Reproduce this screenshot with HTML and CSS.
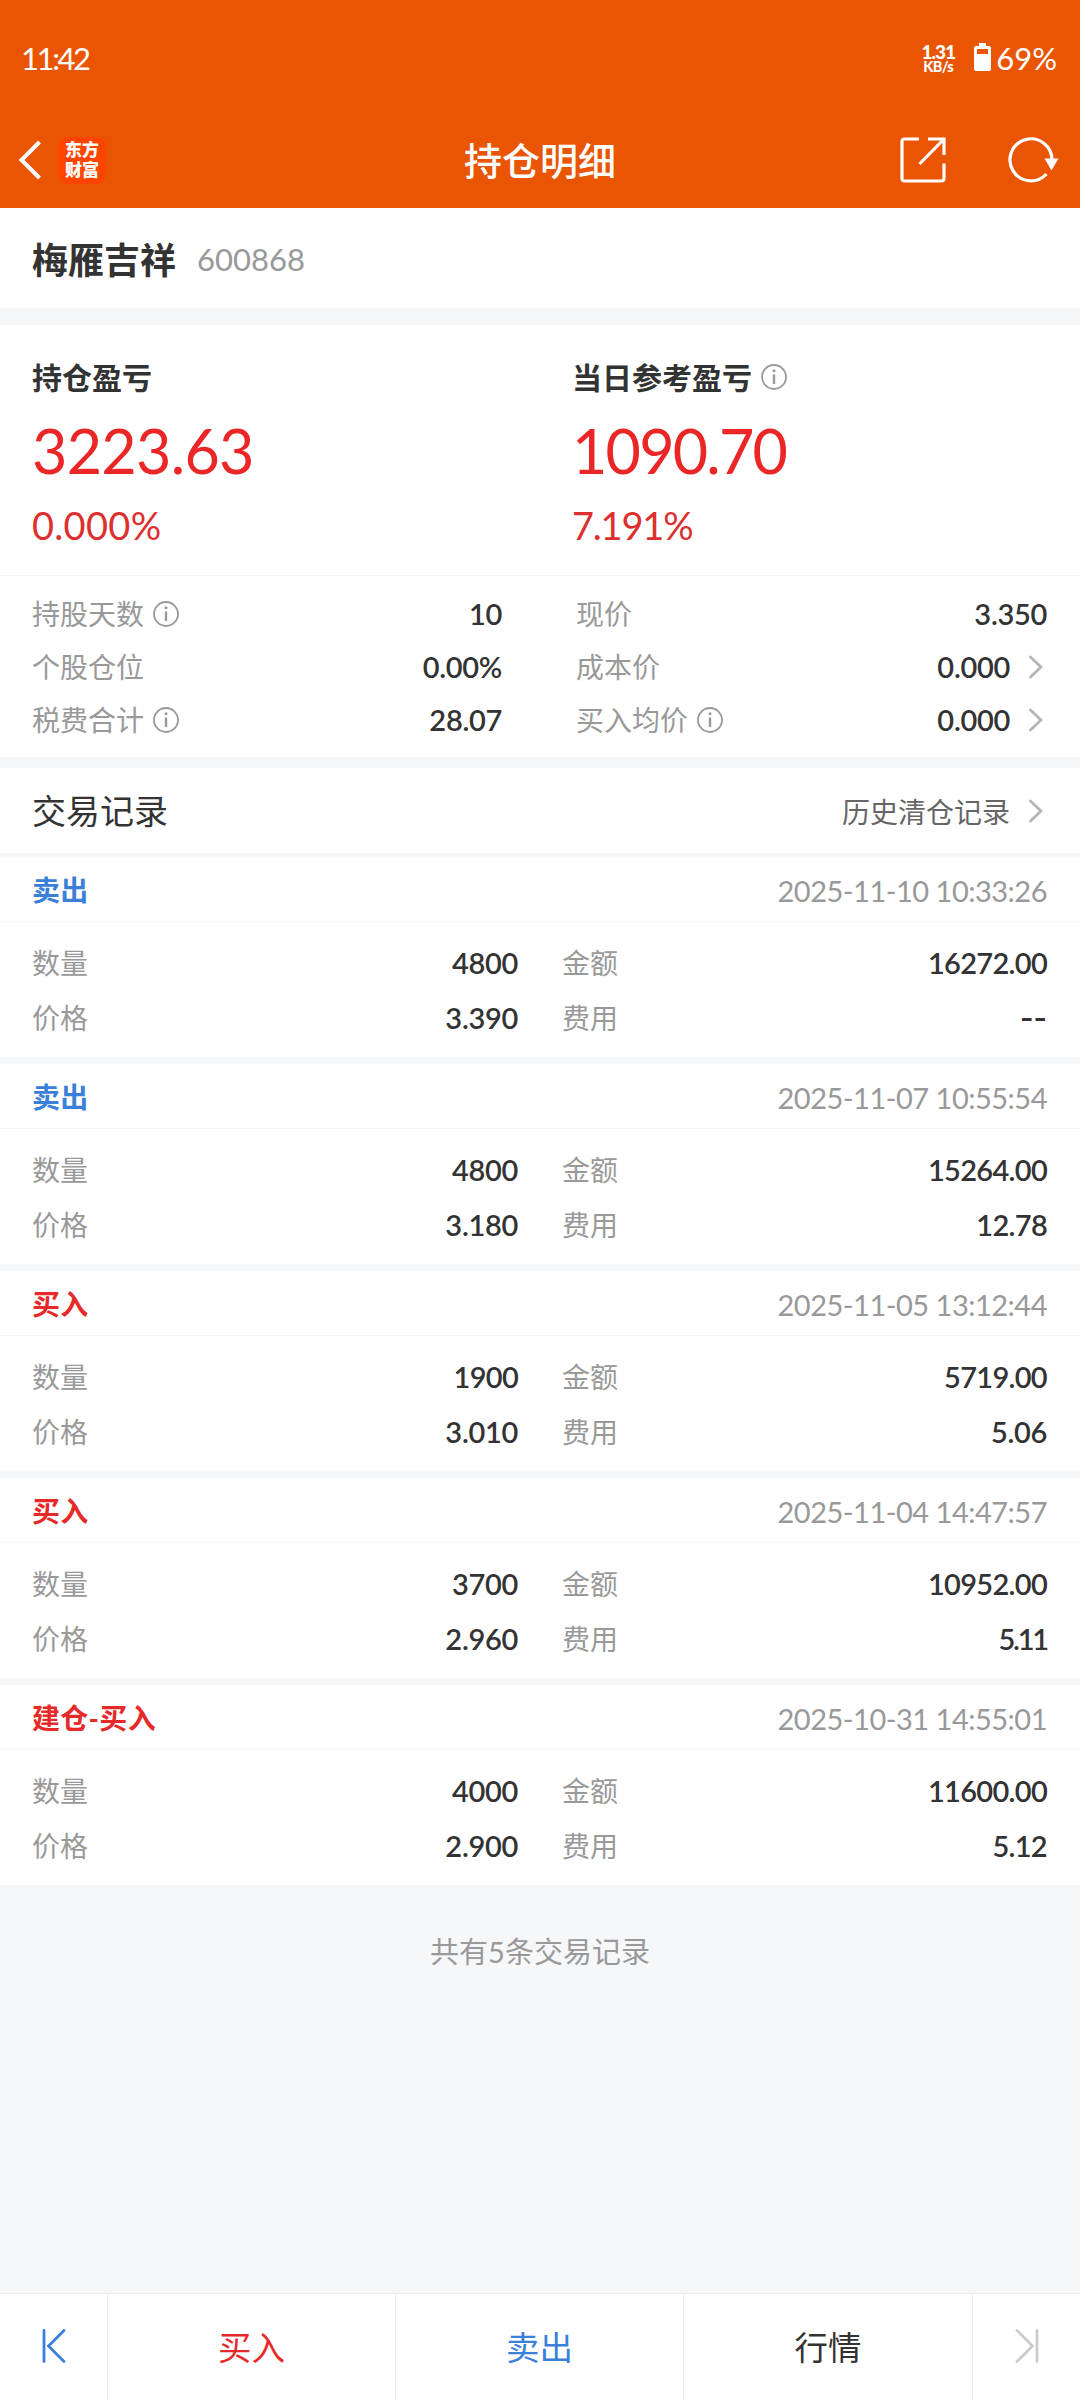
FILE: index.html
```html
<!DOCTYPE html>
<html lang="zh-CN">
  <head>
    <meta charset="UTF-8" />
    <meta name="viewport" content="width=device-width, initial-scale=1.0" />
    <link rel="stylesheet" href="styles.css">
    <title>持仓明细</title>
  </head>
  <body>
    <!-- 图标 -->
    <svg class="sprite">
      <symbol id="icon-info" viewBox="0 0 26 26">
        <circle cx="13" cy="13" r="12" fill="none" stroke="#999" stroke-width="1.8"/>
        <circle cx="13" cy="6.8" r="1.5" fill="#999"/>
        <path d="M13 10.5V20" stroke="#999" stroke-width="2.4"/>
      </symbol>
      <symbol id="icon-arrow" viewBox="0 0 14 24">
        <path d="M1.5 2L12 12L1.5 22" fill="none" stroke="#b5b5b5" stroke-width="2.8" stroke-linecap="round"/>
      </symbol>
    </svg>

    <header class="header">
      <div class="status-bar">
        <span class="time">11:42</span>
        <div class="net-speed">
          <span class="speed">1.31</span>
          <span class="unit">KB/s</span>
        </div>
        <svg class="battery" width="17" height="28" viewBox="0 0 17 28">
          <path fill="#fff" fill-rule="evenodd" d="M5 0h7v3h3a2 2 0 0 1 2 2v21a2 2 0 0 1-2 2H2a2 2 0 0 1-2-2V5a2 2 0 0 1 2-2h3zM3 6v5h11V6z"/>
        </svg>
        <span class="percent">69%</span>
      </div>
      <div class="nav-bar">
        <div class="nav-side">
          <svg class="back" width="24" height="42" viewBox="0 0 24 42">
            <path d="M21.5 3L3.5 21L21.5 39" fill="none" stroke="#fff" stroke-width="4"/>
          </svg>
          <div class="logo">东方<br>财富</div>
        </div>
        <h1>持仓明细</h1>
        <div class="nav-side nav-right">
          <svg width="46" height="46" viewBox="0 0 46 46" fill="none" stroke="#fff" stroke-width="3.2">
            <path d="M19 2H4.500Q2 2 2 4.500V41.500Q2 44 4.500 44H41.500Q44 44 44 41.500V26.500"/>
            <path d="M28 2H44V18M44 2L19.500 27"/>
          </svg>
          <svg width="52" height="46" viewBox="0 0 52 46">
            <path d="M38.500 37A21 21 0 1 1 44 23" fill="none" stroke="#fff" stroke-width="3.200"/>
            <path d="M36.500 21.500H50.500L43.500 33.500z" fill="#fff"/>
          </svg>
        </div>
      </div>
    </header>

    <section class="stock">
      <span class="stock-name">梅雁吉祥</span>
      <span class="stock-code">600868</span>
    </section>

    <section class="profit">
      <div class="profit-item">
        <div class="profit-title">持仓盈亏</div>
        <div class="profit-value">3223.63</div>
        <div class="profit-rate">0.000%</div>
      </div>
      <div class="profit-item today">
        <div class="profit-title">当日参考盈亏<svg class="info"><use href="#icon-info"/></svg></div>
        <div class="profit-value">1090.70</div>
        <div class="profit-rate">7.191%</div>
      </div>
    </section>

    <section class="detail">
      <div class="row"><span class="label">持股天数<svg class="info"><use href="#icon-info"/></svg></span><span class="num">10</span></div>
      <div class="row"><span class="label">现价</span><span class="num">3.350</span></div>
      <div class="row"><span class="label">个股仓位</span><span class="num">0.00%</span></div>
      <div class="row"><span class="label">成本价</span><span class="num">0.000</span><svg class="arrow"><use href="#icon-arrow"/></svg></div>
      <div class="row"><span class="label">税费合计<svg class="info"><use href="#icon-info"/></svg></span><span class="num">28.07</span></div>
      <div class="row"><span class="label">买入均价<svg class="info"><use href="#icon-info"/></svg></span><span class="num">0.000</span><svg class="arrow"><use href="#icon-arrow"/></svg></div>
    </section>

    <section class="record-title">
      <h2>交易记录</h2>
      <span class="history">历史清仓记录</span>
      <svg class="arrow"><use href="#icon-arrow"/></svg>
    </section>

    <!-- 交易列表 -->
    <main class="records">
      <div class="record">
        <div class="record-head"><span class="type sell">卖出</span><span class="date">2025-11-10 10:33:26</span></div>
        <div class="record-body">
          <div class="row"><span class="label">数量</span><span class="num">4800</span></div>
          <div class="row"><span class="label">金额</span><span class="num amount">16272.00</span></div>
          <div class="row"><span class="label">价格</span><span class="num">3.390</span></div>
          <div class="row"><span class="label">费用</span><span class="num empty">--</span></div>
        </div>
      </div>
      <div class="record">
        <div class="record-head"><span class="type sell">卖出</span><span class="date">2025-11-07 10:55:54</span></div>
        <div class="record-body">
          <div class="row"><span class="label">数量</span><span class="num">4800</span></div>
          <div class="row"><span class="label">金额</span><span class="num amount">15264.00</span></div>
          <div class="row"><span class="label">价格</span><span class="num">3.180</span></div>
          <div class="row"><span class="label">费用</span><span class="num amount">12.78</span></div>
        </div>
      </div>
      <div class="record">
        <div class="record-head"><span class="type buy">买入</span><span class="date">2025-11-05 13:12:44</span></div>
        <div class="record-body">
          <div class="row"><span class="label">数量</span><span class="num amount">1900</span></div>
          <div class="row"><span class="label">金额</span><span class="num amount">5719.00</span></div>
          <div class="row"><span class="label">价格</span><span class="num">3.010</span></div>
          <div class="row"><span class="label">费用</span><span class="num">5.06</span></div>
        </div>
      </div>
      <div class="record">
        <div class="record-head"><span class="type buy">买入</span><span class="date">2025-11-04 14:47:57</span></div>
        <div class="record-body">
          <div class="row"><span class="label">数量</span><span class="num">3700</span></div>
          <div class="row"><span class="label">金额</span><span class="num amount">10952.00</span></div>
          <div class="row"><span class="label">价格</span><span class="num">2.960</span></div>
          <div class="row"><span class="label">费用</span><span class="num ones">5.11</span></div>
        </div>
      </div>
      <div class="record">
        <div class="record-head"><span class="type buy">建仓-买入</span><span class="date">2025-10-31 14:55:01</span></div>
        <div class="record-body">
          <div class="row"><span class="label">数量</span><span class="num">4000</span></div>
          <div class="row"><span class="label">金额</span><span class="num amount">11600.00</span></div>
          <div class="row"><span class="label">价格</span><span class="num">2.900</span></div>
          <div class="row"><span class="label">费用</span><span class="num amount">5.12</span></div>
        </div>
      </div>
    </main>
    <p class="total">共有5条交易记录</p>

    <footer class="tab-bar">
      <div class="tab">
        <svg width="24" height="34" viewBox="0 0 24 34" fill="none" stroke="#3b80d8" stroke-width="2.8" stroke-linecap="round">
          <path d="M2 1.500V32.500M22 1.500L6.500 17L22 32.500"/>
        </svg>
      </div>
      <div class="tab buy"><span>买入</span></div>
      <div class="tab sell"><span>卖出</span></div>
      <div class="tab"><span>行情</span></div>
      <div class="tab">
        <svg width="24" height="34" viewBox="0 0 24 34" fill="none" stroke="#ccc" stroke-width="2.8" stroke-linecap="round">
          <path d="M22 1.500V32.500M2 1.500L17.500 17L2 32.500"/>
        </svg>
      </div>
    </footer>
  </body>
</html>
```
FILE: styles.css
```css
* {
    box-sizing: border-box;
    margin: 0;
    padding: 0;
}
body {
    width: 1080px;
    height: 2400px;
    display: flex;
    flex-direction: column;
    background-color: #f6f7f9;
    color: #333;
    font-family: Lato, "Noto Sans CJK SC", sans-serif;
    font-size: 28px;
    line-height: 1;
    overflow: hidden;
}
.sprite {
    display: none;
}
.sell {
    color: #3b80d8;
}
.buy {
    color: #e62a2a;
}

/* 頂部 */
.header {
    height: 208px;
    background-color: #ea5504;
    color: #fff;
}
.status-bar {
    height: 112px;
    padding: 4px 23px 0 21px;
    display: flex;
    align-items: center;
    font-size: 31px;
}
.time {
    flex: 1;
    letter-spacing: -2.4px;
}
.net-speed {
    width: 30px;
    margin-right: 21px;
    display: flex;
    flex-direction: column;
    align-items: center;
    font-weight: 900;
    letter-spacing: -1px;
}
.speed {
    font-size: 19px;
    line-height: 17px;
}
.unit {
    font-size: 14.5px;
    line-height: 14px;
    letter-spacing: -0.6px;
}
.battery {
    margin-right: 5px;
    margin-bottom: 2px;
}
.nav-bar {
    height: 96px;
    padding: 0 20px 0 18px;
    display: flex;
    align-items: center;
    justify-content: space-between;
}
.nav-side {
    width: 180px;
    display: flex;
    align-items: center;
}
.nav-right {
    justify-content: flex-end;
    gap: 62px;
}
.logo {
    width: 47px;
    height: 47px;
    margin-left: 17px;
    padding: 3px 0 0 6px;
    border-radius: 9px;
    background-color: #ff4400;
    font-size: 17px;
    font-weight: 900;
    line-height: 20px;
}
.nav-bar h1 {
    padding-left: 2px;
    font-size: 38px;
    font-weight: 500;
}

/* 股票名稱 */
.stock {
    height: 100px;
    padding: 3px 32px 0;
    display: flex;
    align-items: center;
    background-color: #fff;
}
.stock-name {
    font-size: 36px;
    font-weight: 700;
}
.stock-code {
    margin-left: 21px;
    color: #999;
    font-size: 31px;
}

/* 盈虧 */
.profit {
    height: 251px;
    margin-top: 17px;
    padding: 34px 32px 0;
    display: grid;
    grid-template-columns: 540px 1fr;
    border-bottom: 1px solid #f4f5f7;
    background-color: #fff;
}
.profit-title {
    height: 36px;
    display: flex;
    align-items: center;
    font-size: 30px;
    font-weight: 700;
}
.info {
    width: 26px;
    height: 26px;
    margin-left: 9px;
}
.profit-value {
    margin-top: 23px;
    color: #eb2626;
    font-size: 61px;
    line-height: 66px;
    letter-spacing: -0.7px;
}
.profit-rate {
    margin-top: 21px;
    color: #dc3030;
    font-size: 38px;
    line-height: 40px;
    letter-spacing: 0.3px;
}
.today .profit-value {
    letter-spacing: -1.8px;
}
.today .profit-rate {
    letter-spacing: -1.2px;
}

/* 持倉詳情 */
.detail {
    height: 181px;
    padding: 11px 33px 0 32px;
    display: grid;
    grid-template-columns: 470px 471px;
    grid-auto-rows: 53px;
    column-gap: 74px;
    background-color: #fff;
}
.row {
    display: flex;
    align-items: center;
}
.label {
    flex: 1;
    display: flex;
    align-items: center;
    color: #999;
}
.num {
    font-size: 29px;
    font-weight: 600;
    letter-spacing: -0.3px;
}
.amount {
    letter-spacing: -0.7px;
}
.ones {
    letter-spacing: -2.2px;
}
.empty {
    font-family: Inter, sans-serif;
    letter-spacing: 0;
}
.arrow {
    width: 14px;
    height: 24px;
    margin: 0 4px 0 19px;
}

/* 交易記錄 */
.record-title {
    height: 85px;
    margin-top: 11px;
    padding: 0 33px 0 32px;
    display: flex;
    align-items: center;
    background-color: #fff;
}
.record-title h2 {
    flex: 1;
    font-size: 34px;
    font-weight: 400;
}
.history {
    padding-top: 3px;
    color: #666;
}
.records {
    margin-top: 4px;
    display: flex;
    flex-direction: column;
    gap: 7px;
}
.record {
    height: 200px;
    background-color: #fff;
}
.record-head {
    height: 65px;
    padding: 2px 33px 0 32px;
    display: flex;
    align-items: center;
    justify-content: space-between;
    border-bottom: 1px solid #f4f5f7;
}
.type {
    font-weight: 700;
    letter-spacing: 0.3px;
}
.date {
    color: #999;
    font-size: 29px;
    letter-spacing: -0.5px;
}
.record-body {
    padding: 13px 33px 0 32px;
    display: grid;
    grid-template-columns: 486px 485px;
    grid-auto-rows: 55px;
    column-gap: 44px;
}
.total {
    margin-top: 52px;
    color: #999;
    font-size: 29px;
    text-align: center;
}

/* 底部 */
.tab-bar {
    height: 107px;
    margin-top: auto;
    display: grid;
    grid-template-columns: 108px 288px 288px 289px 107px;
    border-top: 1px solid #ebebee;
    background-color: #fff;
}
.tab {
    padding-bottom: 2px;
    display: flex;
    align-items: center;
    justify-content: center;
    border-right: 1px solid #ebebee;
    font-size: 33.5px;
}
.tab span {
    padding-top: 4px;
}
.tab:last-child {
    border-right: none;
}
```
